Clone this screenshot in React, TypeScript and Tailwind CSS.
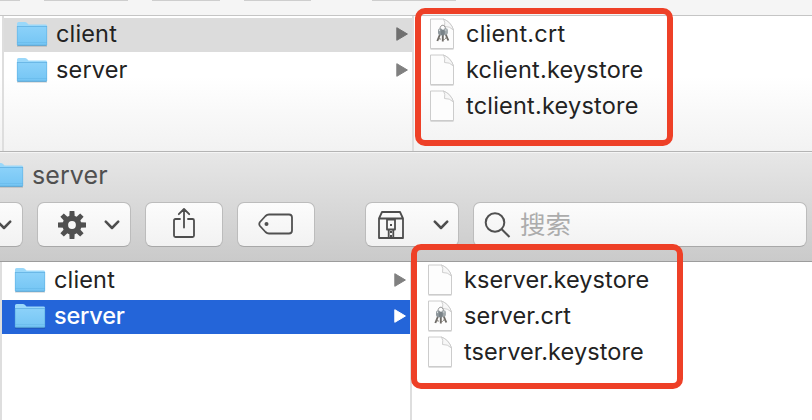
import type { ReactNode } from "react";

function Folder({ id }: { id: string }) {
  return (
    <svg className="h-[26px] w-8 shrink-0" viewBox="0 0 32 26">
      <defs>
        <linearGradient id={id} x1="0" y1="0" x2="0" y2="1">
          <stop offset="0" stopColor="#8bd1f9" />
          <stop offset="1" stopColor="#74c5f4" />
        </linearGradient>
      </defs>
      <path d="M1 25h30" stroke="#000" strokeOpacity=".16" strokeWidth="1.4" />
      <path d="M1 24V2.6Q1 1 2.6 1H9q1 0 1.8.8L12.500 3.600H29.500Q31 3.600 31 5V24z" fill="#9ad8fa" />
      <path d="M1 6H31V23.500Q31 24.500 30 24.500H2Q1 24.500 1 23.500z" fill={`url(#${id})`} />
      <path d="M1 5.500H31" stroke="#5fb0e2" strokeWidth=".8" />
      <path d="M1 21.500H31" stroke="#62b5e6" strokeWidth=".5" />
      <path d="M1.400 24.300H30.600" stroke="#529fce" strokeWidth=".9" />
      <path d="M1.300 5V24M30.700 5V24" stroke="#5fb0e2" strokeWidth=".6" />
    </svg>
  );
}

function FileIcon({ keys }: { keys?: boolean }) {
  return (
    <svg className="h-8 w-[26px] shrink-0" viewBox="0 0 26 32">
      <path d="M1.500 31.200H24.500" stroke="#999" strokeOpacity=".45" strokeWidth="1" />
      <path d="M1.500 1H14.500Q22 4 24.500 12V30.500H1.500z" fill="#fdfdfd" stroke="#c6c6c6" strokeWidth=".9" />
      <path d="M14.500 1Q16.500 4 15.500 8.500Q20.500 8 24.500 12Q22 4 14.500 1z" fill="#f7f7f7" stroke="#c9c9c9" strokeWidth=".9" />
      {keys && (
        <g fill="none">
          <path d="M11 11C11 6 16.500 6 16.500 11" stroke="#8b8b8b" strokeWidth="1" />
          <path d="M12 14L8.300 23M13.800 15V23.500M15.800 14L19.300 22.500" stroke="#6f6c68" strokeWidth="1.900" />
          <path d="M9.800 20.500l2 .8M16 20.500l2-1M14 21.500h1.700" stroke="#858078" strokeWidth="1.200" />
          <rect x="9" y="10.500" width="4.600" height="6.500" rx="2" fill="#8f989d" />
          <rect x="14.300" y="10.300" width="4.600" height="6.500" rx="2" fill="#a0a8ab" />
          <rect x="11.800" y="11.800" width="4" height="6" rx="1.800" fill="#7a8388" />
          <path d="M10.500 11.500v1.600M16.800 11.300v1.400" stroke="#dde1e2" />
        </g>
      )}
    </svg>
  );
}

function FolderRow({ name, state, id }: { name: string; state?: "muted" | "active"; id: string }) {
  const tone = state === "active" ? "bg-[#2465d9] text-white" : state === "muted" ? "bg-[#dcdcdc] text-[#222]" : "text-[#222]";
  const arrow = state === "active" ? "text-white" : state === "muted" ? "text-[#707070]" : "text-[#808080]";
  return (
    <div className={`flex h-[34px] items-center pb-[2px] pl-3 pr-1 ${tone}`}>
      <Folder id={id} />
      <span className={`ml-2 grow text-[23.500px] leading-8 ${state === "active" ? "font-medium tracking-[-0.200px]" : "tracking-[0.150px]"}`}>{name}</span>
      <svg className={`h-[14px] w-3 ${arrow}`} viewBox="0 0 12 14">
        <path d="M.800 .700L11.400 7 .800 13.300z" fill="currentColor" stroke="currentColor" strokeWidth="1" strokeLinejoin="round" />
      </svg>
    </div>
  );
}

function FileRow({ name, keys, tight }: { name: string; keys?: boolean; tight?: boolean }) {
  return (
    <div className="flex h-[34px] items-center pb-[2px] pl-[15px] text-[#222]">
      <FileIcon keys={keys} />
      <span className={`ml-[11px] text-[23.500px] leading-8 ${tight ? "tracking-[0.090px]" : "tracking-[0.210px]"}`}>{name}</span>
    </div>
  );
}

function ToolButton({ className, children }: { className: string; children?: ReactNode }) {
  return (
    <div className={`flex h-[45px] shrink-0 items-center rounded-[7px] border border-[#bcbcbc] border-b-[#a8a8a8] bg-linear-to-b from-[#fcfcfc] to-[#f2f2f2] ${className}`}>
      {children}
    </div>
  );
}

function Chevron() {
  return (
    <svg className="h-[10px] w-4 shrink-0" viewBox="0 0 16 10" fill="none" stroke="#4d4d4d" strokeWidth="2.500" strokeLinecap="round" strokeLinejoin="round">
      <path d="M1.800 1.700L8 8l6.200-6.300" />
    </svg>
  );
}

function Gear() {
  return (
    <svg className="h-7 w-7" viewBox="-14 -14 28 28" fill="#505050">
      {[0, 45, 90, 135].map((a) => (
        <path key={a} d="M-2.400-14H2.400L2.700-8V8L2.400 14H-2.400L-2.700 8V-8z" transform={`rotate(${a})`} />
      ))}
      <circle r="9.600" />
      <circle r="3.900" fill="#f8f8f8" />
    </svg>
  );
}

export default function App() {
  return (
    <main className="relative flex h-[420px] w-[812px] flex-col overflow-hidden bg-white font-['Inter','Noto_Sans_CJK_SC',sans-serif]">
      <section className="flex h-[151px] shrink-0 flex-col">
        <div className="flex h-4 items-start border-b border-[#c5c5c5] bg-[#f5f5f5]">
          <div className="h-px w-5 bg-[#cecece]" />
          <div className="ml-6 h-px w-[84px] bg-[#cecece]" />
          <div className="ml-6 h-px w-[68px] bg-[#cecece]" />
          <div className="ml-6 h-px w-[67px] bg-[#cecece]" />
          <div className="ml-[61px] h-px w-[84px] bg-[#cecece]" />
        </div>
        <div className="flex grow bg-linear-to-b from-white from-45% to-[#f2f2f2] pl-[2px]">
          <div className="flex w-[412px] flex-col gap-[2px] border-x-2 border-[#dedede] pt-[2px]">
            <FolderRow name="client" state="muted" id="folder-a" />
            <FolderRow name="server" id="folder-b" />
          </div>
          <div className="flex flex-col gap-[2px] pt-[2px]">
            <FileRow name="client.crt" keys />
            <FileRow name="kclient.keystore" />
            <FileRow name="tclient.keystore" />
          </div>
        </div>
      </section>

      <header className="flex h-[111px] shrink-0 flex-col border-y border-t-[#b4b4b4] border-b-[#9c9c9c] bg-linear-to-b from-[#e7e7e7] to-[#cacaca]">
        <div className="flex h-[50px] items-center border-t border-[#f5f5f5] pb-[5px]">
          <div className="-ml-2 flex"><Folder id="folder-c" /></div>
          <span className="ml-2 text-[25px] leading-8 tracking-[0.100px] text-[#505050]">server</span>
        </div>
        <div className="flex">
          <ToolButton className="-ml-[10px] w-[33px] pl-[5px]"><Chevron /></ToolButton>
          <ToolButton className="ml-[14px] w-[94px] justify-between pl-5 pr-[10px]"><Gear /><Chevron /></ToolButton>
          <ToolButton className="ml-[14px] w-[78px] justify-center pb-[3px]">
            <svg className="h-8 w-6" viewBox="0 0 24 32" fill="none" stroke="#4d4d4d" strokeWidth="1.800" strokeLinecap="round" strokeLinejoin="round">
              <path d="M8 12H3.500Q2 12 2 13.500V28.500Q2 30 3.500 30H20.500Q22 30 22 28.500V13.500Q22 12 20.500 12H16M12 20.500V2M6.800 7.200L12 2l5.200 5.200" />
            </svg>
          </ToolButton>
          <ToolButton className="ml-[14px] w-[78px] justify-center pb-px">
            <svg className="h-[22px] w-9" viewBox="0 0 36 22" fill="none" stroke="#505050" strokeWidth="1.800" strokeLinejoin="round">
              <path d="M11 1.500H31Q34 1.500 34 4.500V17.500Q34 20.500 31 20.500H11Q9 20.500 7.500 19L2 13Q.500 11 2 9L7.500 3Q9 1.500 11 1.500z" />
              <circle cx="8.500" cy="11" r="2" fill="#505050" stroke="none" />
            </svg>
          </ToolButton>
          <ToolButton className="ml-[50px] w-[94px] justify-between pl-[11px] pr-[9px]">
            <svg className="h-[30px] w-7" viewBox="0 0 28 30" fill="none" stroke="#4d4d4d" strokeWidth="1.800" strokeLinejoin="round">
              <path d="M2 8.500L5 2H23L26 8.500V28H2zM2 8.500H26M10 9.500h8v10h-8zM11.700 20V28M16.300 20V28" />
              <path d="M13 14h2v2h-2zM13 21h2v2h-2zM13 25h2v2h-2z" fill="#4d4d4d" stroke="none" />
            </svg>
            <Chevron />
          </ToolButton>
          <ToolButton className="ml-[14px] w-[334px] pl-[10px]">
            <svg className="h-7 w-7 shrink-0" viewBox="0 0 28 28" fill="none" stroke="#505050" strokeWidth="2">
              <circle cx="11" cy="11.500" r="9.300" /><path d="M17.700 18.200L25.500 26" />
            </svg>
            <span className="ml-2 text-[25.500px] leading-8 text-[#acacac]">搜索</span>
          </ToolButton>
        </div>
      </header>

      <section className="flex h-[158px] shrink-0">
        <div className="flex w-[412px] flex-col gap-[2px] border-l-2 border-r-2 border-[#dedede] pt-[2px]">
          <FolderRow name="client" id="folder-d" />
          <FolderRow name="server" state="active" id="folder-e" />
        </div>
        <div className="flex flex-col gap-[2px] pt-[2px]">
          <FileRow name="kserver.keystore" tight />
          <FileRow name="server.crt" keys tight />
          <FileRow name="tserver.keystore" tight />
        </div>
      </section>

      <div className="absolute left-[415px] top-2 h-[138px] w-[258px] rounded-[10px] border-6 border-[#ee4027]" />
      <div className="absolute left-[410.500px] top-[243.500px] h-[145px] w-[272.500px] rounded-[10px] border-6 border-[#ee4027]" />
    </main>
  );
}
